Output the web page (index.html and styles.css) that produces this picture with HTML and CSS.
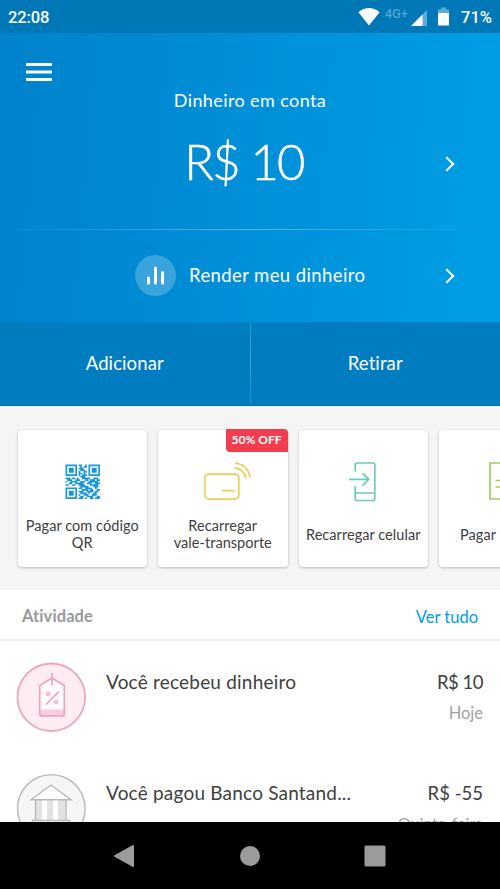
FILE: index.html
```html
<!DOCTYPE html>
<html lang="pt-BR">
<head>
<meta charset="utf-8">
<meta name="viewport" content="width=device-width">
<title>Dinheiro em conta</title>
<link rel="stylesheet" href="styles.css">
</head>
<body>
<div class="phone">
  <section class="hero">
    <header class="status">
      <span class="clock">22:08</span>
      <div class="indicators">
        <svg class="wifi" width="22" height="18" viewBox="0 0 22 18"><path d="M.4 4.200Q11-4 21.600 4.200L11 17.400Z" fill="#fff"/></svg>
        <span class="network">4G+</span>
        <svg class="signal" width="16" height="16" viewBox="0 0 16 16"><path d="M0 16 16 0V16Z" fill="#5cabda"/><path d="M0 16 11.500 4.500V16Z" fill="#fff"/></svg>
        <svg class="battery" width="11" height="19" viewBox="0 0 11 19"><path d="M0 2.500h3V.5h5v2h3V7H0Z" fill="#5cabda"/><path d="M0 6h11v12.500H0Z" fill="#fff"/></svg>
        <span class="percent">71%</span>
      </div>
    </header>
    <div class="balance">
      <svg class="menu" width="26" height="19" viewBox="0 0 26 19"><path d="M0 1.500h26M0 9h26M0 16.500h26" stroke="#fff" stroke-width="2.800"/></svg>
      <h1 class="balance-label">Dinheiro em conta</h1>
      <p class="amount">R$ 10</p>
      <svg class="chevron balance-chevron" viewBox="0 0 10 16"><path d="m1.300 1.200 6.900 6.800-6.900 6.800"/></svg>
    </div>
    <div class="rule"></div>
    <div class="yield">
      <span class="bars"><svg width="18" height="19" viewBox="0 0 18 19"><path d="M1.500 12v5M8.500 2v15M15.500 6.500V17" stroke="#fff" stroke-width="3" stroke-linecap="round"/></svg></span>
      <span class="yield-label">Render meu dinheiro</span>
      <svg class="chevron" viewBox="0 0 10 16"><path d="m1.300 1.200 6.900 6.800-6.900 6.800"/></svg>
    </div>
  </section>
  <nav class="actions"><span class="add">Adicionar</span><i class="divider"></i><span class="withdraw">Retirar</span></nav>
  <section class="shortcuts">
    <article class="card">
      <svg class="art" width="55" height="42" viewBox="0 0 55 42">
        <g transform="translate(10.500 4.500) scale(1.640)" fill="none" stroke="#1597d9">
          <path d="M.5.500h6v6h-6zM14.500.500h6v6h-6zM.5 14.500h6v6h-6z"/>
          <path stroke-width="3" d="M2 3.500h3M16 3.500h3M2 17.500h3"/>
          <path d="M8 .5h2M12 .5h1M9 1.500h1M11 1.500h2M8 2.500h3M9 3.500h3M11 4.500h2M8 4.500h1M8 5.500h2M11 5.500h1M8 6.500h1M10 6.500h3M9 7.500h3M0 8.500h3M4 8.500h2M7 8.500h1M10 8.500h5M17 8.500h3M1 9.500h3M6 9.500h3M12 9.500h2M15 9.500h3M19 9.500h2M0 10.500h1M3 10.500h4M9 10.500h3M14 10.500h6M2 11.500h2M6 11.500h5M13 11.500h3M18 11.500h3M0 12.500h2M4 12.500h2M8 12.500h4M15 12.500h5M9 13.500h5M17 13.500h3M8 14.500h2M12 14.500h4M18 14.500h1M10 15.500h4M15 15.500h2M19 15.500h2M8 16.500h3M13 16.500h4M18 16.500h2M9 17.500h4M14 17.500h1M17 17.500h2M8 18.500h1M11 18.500h3M16 18.500h3M9 19.500h2M13 19.500h4M19 19.500h2M8 20.500h3M12 20.500h1M15 20.500h2M18 20.500h3"/>
        </g>
      </svg>
      <p class="caption two">Pagar com código<br>QR</p>
    </article>
    <article class="card">
      <span class="promo">50% OFF</span>
      <svg class="art" width="55" height="42" viewBox="0 0 55 42"><g fill="none" stroke="#e6d154" stroke-width="1.700" stroke-linecap="round"><rect x="9.800" y="14.100" width="34" height="25" rx="3.800"/><path d="M27.600 30.700h11.500M40.500 7.800q8.500 1.700 10.200 9.700M40.500 3q12.500 2 14.500 14"/></g></svg>
      <p class="caption two">Recarregar<br>vale-transporte</p>
    </article>
    <article class="card">
      <svg class="art" width="55" height="42" viewBox="0 0 55 42"><path d="M19.200 11.400V5q0-2 2-2h15.600q2 0 2 2v33.500q0 2-2 2H21.200q-2 0-2-2V26.300M19.200 33h19.600M13 19.300h19.500M26.500 13.200l6.200 6.100-6.200 6.300" fill="none" stroke="#6ec9b5" stroke-width="1.700"/></svg>
      <p class="caption one">Recarregar celular</p>
    </article>
    <article class="card">
      <svg class="art" width="55" height="42" viewBox="0 0 55 42"><path d="M14 3h28v36H14ZM19.500 20.500h17M19.500 27h17" fill="none" stroke="#a2cb58" stroke-width="1.700"/></svg>
      <p class="caption one bills">Pagar contas</p>
    </article>
  </section>
  <section class="activity">
    <header class="activity-head"><h2>Atividade</h2><a>Ver tudo</a></header>
    <article class="entry">
      <svg class="avatar" width="70" height="70" viewBox="0 0 70 70">
        <circle cx="35.300" cy="35.300" r="33.800" fill="#fdedf3" stroke="#eda4c0" stroke-width="1.800"/>
        <path d="M23.500 23.500 36 16 48.500 23.500V52q0 2-2 2h-21q-2 0-2-2Z" fill="#fffafc"/>
        <path d="M23.500 47.500h25V54h-25Z" fill="#f9cddd"/>
        <path d="M23.700 23.500 36 16 48.300 23.500V52q0 1.800-1.800 1.800h-21q-1.800 0-1.800-1.800ZM36 11v12M30 42.500 43 29.500" fill="none" stroke="#eda4c0" stroke-width="1.700"/>
        <circle cx="32" cy="31.700" r="2.500" fill="#f7bfd3"/><circle cx="40" cy="40" r="2.500" fill="#f7bfd3"/>
      </svg>
      <h3 class="received">Você recebeu dinheiro</h3>
      <div class="value"><strong>R$ 10</strong><small class="today">Hoje</small></div>
    </article>
    <article class="entry">
      <svg class="avatar" width="70" height="70" viewBox="0 0 70 70">
        <circle cx="35.300" cy="35.500" r="33.800" fill="#f6f6f6" stroke="#bdbdbd" stroke-width="1.500"/>
        <path d="M19 27h31v21H19Z" fill="#fff"/><path d="M20 27h6v21h-6zM31 27h6v21h-6zM42 27h7v21h-7z" fill="#e2e2e2"/>
        <path d="M15 26.700 35 12 55 26.700ZM19.500 26.500V47.500M50 26.500V47.500" fill="#fff" stroke="#b7b7b7" stroke-width="1.400"/><path d="M16.500 47.500h37v5h-37Z" fill="#fff" stroke="#b7b7b7" stroke-width="1.400"/>
      </svg>
      <h3 class="paid">Você pagou Banco Santand...</h3>
      <div class="value"><strong class="debit">R$ -55</strong><small class="weekday">Quinta-feira</small></div>
    </article>
  </section>
  <footer class="navigation">
    <svg width="22" height="24" viewBox="0 0 22 24"><path d="M1 12 19 2V22Z" fill="#9b9b9b" stroke="#9b9b9b" stroke-width="2" stroke-linejoin="round"/></svg>
    <svg width="22" height="24" viewBox="0 0 22 24"><circle cx="11" cy="12" r="10" fill="#9b9b9b"/></svg>
    <svg width="22" height="24" viewBox="0 0 22 24"><rect x=".5" y="1.500" width="21" height="21" rx="1.500" fill="#9b9b9b"/></svg>
  </footer>
</div>
</body>
</html>
```
FILE: styles.css
```css
* { box-sizing: border-box; }
body, h1, h2, h3, p { margin: 0; }
body { font-family: Lato, "Open Sans", sans-serif; color: #404040; font-variant-ligatures: none; }
svg { display: block; flex: none; overflow: visible; }
.phone { width: 500px; height: 889px; overflow: hidden; display: flex; flex-direction: column; background: #fff; }
.hero { height: 322px; flex: none; background: linear-gradient(95deg, #0082cc 0%, #008ed7 45%, #009fe5 100%); color: #fff; }
.status { height: 33px; padding: 2px 8px 0; display: flex; justify-content: space-between; align-items: center; background: #0077b6; font-family: Roboto, sans-serif; font-weight: 500; font-size: 17px; }
.clock { font-size: 16.5px; letter-spacing: -.1px; }
.indicators { display: flex; align-items: center; height: 31px; }
.wifi { margin: -2px -1px 0 0; }
.network { font-size: 13px; color: #4fa5d5; margin: -8px 3px 0 6px; }
.signal { margin-top: 1px; }
.battery { margin: -3px 12px 0 11px; }
.percent { font-size: 16.5px; }
.balance { height: 196px; display: grid; grid-template-columns: 78px 1fr 78px; grid-template-rows: 55px 24px 98px; }
.menu { margin: 30px 0 0 26px; }
.balance-label { grid-column: 1 / -1; grid-row: 2; text-align: center; font-weight: 400; font-size: 18px; line-height: 24px; letter-spacing: .4px; }
.amount { grid-column: 2; grid-row: 3; text-align: center; font-weight: 300; font-size: 49px; line-height: 98px; letter-spacing: -1.8px; padding-right: 12px; -webkit-text-stroke: .5px #fff; }
.chevron { width: 10px; height: 16px; fill: none; stroke: #fff; stroke-width: 2; }
.balance-chevron { grid-column: 3; grid-row: 3; margin: 44px 0 0 23px; }
.rule { height: 1px; background: linear-gradient(90deg, transparent, #58b5e5 50%, transparent); }
.yield { height: 91px; display: flex; align-items: center; padding: 0 45px 0 135px; }
.bars { display: flex; width: 41px; height: 41px; border-radius: 50%; align-items: center; justify-content: center; background: #39a3dc; }
.yield-label { flex: 1; margin: -2px 0 0 13px; font-size: 18.5px; letter-spacing: .4px; white-space: nowrap; }
.actions { height: 84px; flex: none; display: grid; grid-template-columns: 249.5px 1px 1fr; align-items: center; text-align: center; background: #007dc0; color: #fff; font-size: 18.5px; letter-spacing: .1px; border-bottom: 1px solid #006eab; }
.actions span { margin-top: -2px; }
.divider { height: 83px; background: linear-gradient(#209ad4, #36a5dc, #168ccb); }
.shortcuts { height: 184px; flex: none; display: flex; gap: 11px; padding: 24px 0 0 17.5px; background: #f5f5f5; overflow: hidden; }
.card { position: relative; width: 129.5px; height: 137px; flex: none; padding-top: 30px; display: flex; flex-direction: column; align-items: center; background: #fff; border-radius: 4px; box-shadow: 0 1px 3px rgba(0,0,0,.24); }
.caption { font-size: 14.5px; line-height: 17px; letter-spacing: .05px; text-align: center; white-space: nowrap; }
.two { margin-top: 15px; }
.one { margin-top: 24px; }
.bills { word-spacing: 6px; }
.promo { position: absolute; top: -1px; right: 0; width: 62px; height: 23px; background: #f23d4f; color: #fff; font-size: 12px; font-weight: 700; line-height: 22px; text-align: center; border-radius: 0 4px 0 4px; }
.activity { height: 232px; flex: none; overflow: hidden; }
.activity-head { height: 51px; border-bottom: 2px solid #eee; padding: 5px 22px 0; display: flex; align-items: center; justify-content: space-between; }
.activity-head h2 { font-size: 16.5px; line-height: 20px; margin-top: -2px; letter-spacing: .1px; font-weight: 700; color: #999; }
.activity-head a { font-size: 16.5px; color: #009ee3; }
.entry { display: flex; height: 111px; padding: 21px 17px 0 16px; }
.entry h3 { flex: 1; margin-left: 20px; font-size: 19px; line-height: 40px; font-weight: 400; letter-spacing: .2px; white-space: nowrap; }
.value { text-align: right; display: flex; flex-direction: column; }
.value strong { font-size: 18.5px; line-height: 40px; font-weight: 400; letter-spacing: -.5px; white-space: nowrap; }
.value .debit { letter-spacing: 0; }
.value small { font-size: 16.5px; line-height: 22px; color: #a0a0a0; }
.value .weekday { font-size: 16px; margin-top: -1px; }
.navigation { height: 67px; flex: none; display: flex; justify-content: center; gap: 103px; align-items: center; background: #000; }
```
